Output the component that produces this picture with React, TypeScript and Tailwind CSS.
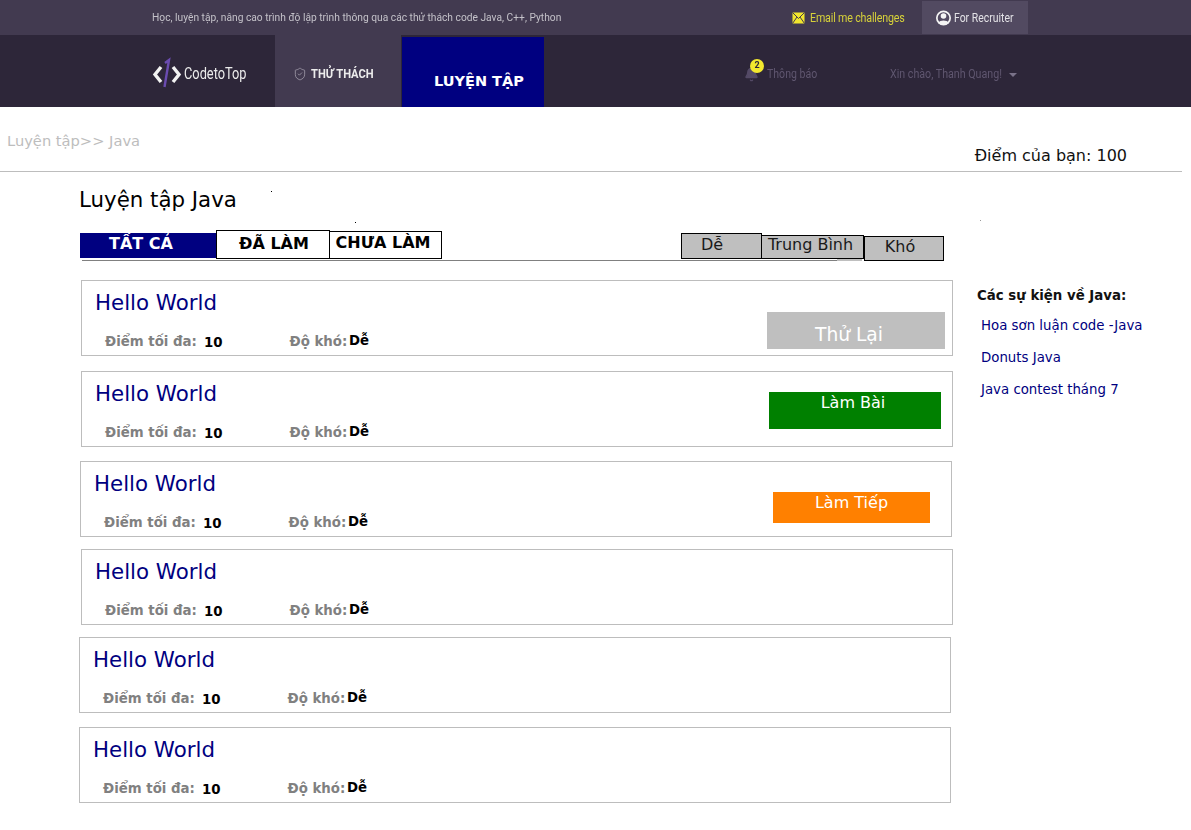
import { ShieldCheck, Bell } from 'lucide-react';

const cards = [
  { wrap: 'ml-[81px] mt-0', action: 'Thử Lại', btn: 'w-[178px] h-[37px] mt-[31px] mr-[7px] bg-[#bfbfbf] text-[18.67px] pt-[13px] pr-[14px] text-white' },
  { wrap: 'ml-[81px] mt-[15px]', action: 'Làm Bài', btn: 'w-[172px] h-[37px] mt-[20px] mr-[11px] bg-[#008000] text-[16px] text-white pt-[1px] pr-[4px]' },
  { wrap: 'ml-[80px] mt-[14px]', action: 'Làm Tiếp', btn: 'w-[157px] h-[31px] mt-[30px] mr-[21px] bg-[#ff8000] text-[16px] text-white pt-[1px]' },
  { wrap: 'ml-[81px] mt-[12px]' },
  { wrap: 'ml-[79px] mt-[12px]' },
  { wrap: 'ml-[79px] mt-[14px]' },
];

function Logo() {
  return (
    <svg width="30" height="32" viewBox="0 0 30 32" fill="none" className="shrink-0">
      <path d="M9 11 L3 18.5 L9 26" stroke="#f2f2f2" strokeWidth="3.4" />
      <path d="M21 11 L27 18.5 L21 26" stroke="#f2f2f2" strokeWidth="3.4" />
      <path d="M12.5 31 L17 4 L13 7" stroke="#6a4bb0" strokeWidth="2.4" />
    </svg>
  );
}

function MailIcon() {
  return (
    <svg width="13" height="12" viewBox="0 0 13 12" className="shrink-0">
      <rect x="0.5" y="0.5" width="12" height="11" fill="#f0e52e" />
      <path d="M0.5 0.5 L6.5 6.5 L12.5 0.5 M0.5 11.5 L5 5 M12.5 11.5 L8 5" stroke="#423a50" strokeWidth="1" fill="none" />
    </svg>
  );
}

function RecruiterIcon() {
  return (
    <svg width="15" height="16" viewBox="0 0 15 16" className="shrink-0">
      <circle cx="7.5" cy="8" r="7.5" fill="#f4f4f4" />
      <circle cx="7.5" cy="8" r="5.8" fill="#524a61" />
      <circle cx="7.5" cy="6" r="2.8" fill="#f4f4f4" />
      <path d="M2.6 13 C3.5 9.8 11.5 9.8 12.4 13 C10 15.6 5 15.6 2.6 13 Z" fill="#f4f4f4" />
    </svg>
  );
}

function TopHeader() {
  return (
    <header className="font-['Roboto',sans-serif]">
      <div className="h-[35px] bg-[#423a50] flex items-center pl-[152px]">
        <span className="text-[11.5px] text-[#c4c2c9] blur-[0.4px] w-[640px] whitespace-nowrap scale-x-[0.89] origin-left">
          Học, luyện tập, nâng cao trình độ lập trình thông qua các thử thách code Java, C++, Python
        </span>
        <div className="flex items-center gap-[5px] w-[130px] text-[#d6d13a] text-[12px] tracking-[-0.2px] blur-[0.3px] whitespace-nowrap">
          <MailIcon />
          <span className="scale-x-[0.89] origin-left">Email me challenges</span>
        </div>
        <div className="h-[33px] w-[106px] mb-[-0.5px] bg-[#524a61] flex items-center pl-[14px] gap-[3px] text-[#e3e2e6] text-[12px] blur-[0.3px] whitespace-nowrap">
          <RecruiterIcon />
          <span className="scale-x-[0.87] origin-left">For Recruiter</span>
        </div>
      </div>
      <div className="h-[72px] bg-[#2d2639] flex">
        <div className="w-[122px] pl-[152px] box-content flex items-center gap-[2px] pt-[2px]">
          <Logo />
          <span className="text-[#ececec] text-[16px] blur-[0.4px] scale-x-[0.8] origin-left pt-[3px]">CodetoTop</span>
        </div>
        <div className="w-[126px] bg-[#423a50] flex items-center pl-[18px] gap-[4px] ml-[1px] pt-[6px]">
          <ShieldCheck size={14} color="#9a95a3" strokeWidth={1.5} className="shrink-0" />
          <span className="text-[#ececec] text-[12px] font-bold blur-[0.4px] whitespace-nowrap scale-x-[0.93] origin-left">THỬ THÁCH</span>
        </div>
        <div className="w-[142px] h-[70px] mt-[2px] ml-[1px] bg-[#000080] flex items-center pl-[32px] pt-[20px] font-['DejaVu_Sans',sans-serif] text-white text-[14.5px] font-bold whitespace-nowrap">
          LUYỆN TẬP
        </div>
        <div className="flex items-center ml-[200px] pt-[6px] blur-[0.3px] whitespace-nowrap">
          <div className="relative w-[23px] h-[20px] flex items-center">
            <Bell size={15} color="#544a66" fill="#544a66" />
            <span className="absolute -top-[5px] left-[6px] w-[14px] h-[14px] rounded-full bg-[#f2e82e] text-[#2d2639] text-[9px] font-bold flex items-center justify-center">2</span>
          </div>
          <span className="text-[#5f566f] text-[12px] w-[123px] scale-x-[0.88] origin-left">Thông báo</span>
          <span className="text-[#5f566f] text-[12px] w-[112px] scale-x-[0.89] origin-left">Xin chào, Thanh Quang!</span>
          <span className="ml-[7px] mt-[1px] w-0 h-0 border-x-[4px] border-x-transparent border-t-[4px] border-t-[#7a7289]" />
        </div>
      </div>
    </header>
  );
}

function Filters() {
  return (
    <div className="ml-[80px] w-[864px] h-[31px] mt-[17px] relative flex text-[16px]">
      <div className="w-[136px] h-[25px] mt-[3px] bg-[#000080] text-white font-bold text-center leading-[22px] pr-[14px]">TẤT CẢ</div>
      <div className="w-[114px] h-[29px] border border-black font-bold text-center leading-[25px] pl-[2px]">ĐÃ LÀM</div>
      <div className="w-[113px] h-[28px] mt-[1px] -ml-[1px] border border-black font-bold text-center leading-[21px] pr-[5px]">CHƯA LÀM</div>
      <div className="w-[81px] h-[26px] mt-[3px] ml-[239px] bg-[#bfbfbf] border border-black text-center leading-[21px] text-[#1a1a1a] pr-[19px]">Dễ</div>
      <div className="w-[103px] h-[24px] mt-[5px] -ml-[1px] bg-[#bfbfbf] border border-black text-center leading-[18px] text-[#1a1a1a] pr-[4px]">Trung Bình</div>
      <div className="w-[80px] h-[25px] mt-[6px] bg-[#bfbfbf] border border-black text-center leading-[19px] text-[#1a1a1a] pr-[8px]">Khó</div>
      <span className="absolute left-[2px] w-[600px] bottom-0 h-px bg-[#808080]" />
      <span className="absolute left-[602px] w-[155px] bottom-0 h-px bg-[#808080]" />
      <span className="absolute left-[757px] w-[25px] top-[29px] h-[2px] bg-[#bfbfbf]" />
    </div>
  );
}

function ExerciseCard({ wrap, action, btn }: { wrap: string; action?: string; btn?: string }) {
  return (
    <div className={`${wrap} w-[872px] h-[76px] border border-[#bdbdbd] flex justify-between`}>
      <div className="pl-[13px]">
        <div className="text-[#000080] text-[21.33px] leading-[24px] mt-[10px]">Hello World</div>
        <div className="flex text-[13.33px] font-bold mt-[18px] ml-[10px] leading-[16px]">
          <span className="text-[#808080] w-[99px] mt-[1px]">Điểm tối đa:</span>
          <span className="text-black w-[85.5px] mt-[2px]">10</span>
          <span className="text-[#808080] w-[59.5px] mt-[1px]">Độ khó:</span>
          <span className="text-black">Dễ</span>
        </div>
      </div>
      {action && <div className={`${btn} text-center leading-[20px]`}>{action}</div>}
    </div>
  );
}

export default function App() {
  return (
    <div className="relative min-h-[830px] bg-white text-black font-['DejaVu_Sans',sans-serif]">
      <TopHeader />
      <div className="h-[65px] w-[1182px] border-b border-[#bdbdbd] flex justify-between">
        <span className="ml-[7px] mt-[25px] text-[14.67px] leading-[17px] text-[#bdbdbd]">Luyện tập&gt;&gt; Java</span>
        <span className="mr-[55px] mt-[39px] text-[16px] leading-[19px] text-[#111111]">Điểm của bạn: 100</span>
      </div>
      <div className="flex">
        <main className="w-[977px] pb-[27px]">
          <h1 className="ml-[79px] mt-[15px] text-[21.33px] leading-[26px] font-normal">Luyện tập Java</h1>
          <Filters />
          <div className="mt-[19px]">
            {cards.map((c, i) => (
              <ExerciseCard key={i} {...c} />
            ))}
          </div>
        </main>
        <aside className="w-[200px] mt-[115px]">
          <div className="text-[13.33px] font-bold leading-[18px] text-[#111111]">Các sự kiện về Java:</div>
          <ul className="ml-[4px] mt-[13px] text-[13.33px] leading-[16px] text-[#000080] flex flex-col gap-[16px]">
            <li>Hoa sơn luận code -Java</li>
            <li>Donuts Java</li>
            <li>Java contest tháng 7</li>
          </ul>
        </aside>
      </div>
      {/* stray specks left over in the mockup */}
      <span className="absolute left-[271px] top-[191px] w-px h-px bg-black" />
      <span className="absolute left-[355px] top-[222px] w-px h-px bg-black" />
      <span className="absolute left-[980px] top-[220px] w-px h-px bg-[#999999]" />
    </div>
  );
}
